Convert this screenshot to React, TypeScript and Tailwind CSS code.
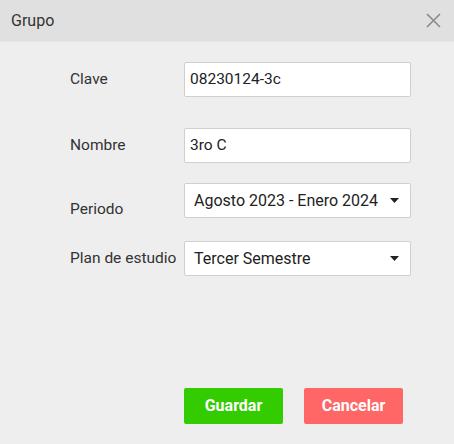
import React from "react";

function Caret() {
  return (
    <svg width="9" height="5" viewBox="0 0 9 5" className="shrink-0">
      <path d="M0 0 L9 0 L4.5 5 Z" fill="#222" />
    </svg>
  );
}

export default function App() {
  return (
    <div
      className="w-[454px] h-[444px] flex flex-col bg-[#eeeeee] text-[#333]"
      style={{ fontFamily: "Roboto, 'Liberation Sans', sans-serif" }}
    >
      <div className="h-[42px] shrink-0 bg-[#e0e0e0] border-b border-[#e6e6e6] flex items-center justify-between pl-[11px] pr-[13px]">
        <span className="text-[16px] text-[#333] leading-none">Grupo</span>
        <svg width="15" height="15" viewBox="0 0 15 15">
          <path d="M1 1 L14 14 M14 1 L1 14" stroke="#8a8a8a" strokeWidth="1.6" />
        </svg>
      </div>
      <div className="flex-1 flex flex-col pl-[70px] pr-[43px]">
        <div className="flex items-center h-[35px] mt-[20px]">
          <span className="w-[114px] text-[15.5px] text-[#333]">Clave</span>
          <div className="flex-1 h-[35px] bg-white border border-[#cfcfcf] rounded-[2px] flex items-center px-[5px] text-[15.5px] text-[#222]">
            08230124-3c
          </div>
        </div>
        <div className="flex items-center h-[35px] mt-[31px]">
          <span className="w-[114px] text-[15.5px] text-[#333]">Nombre</span>
          <div className="flex-1 h-[35px] bg-white border border-[#cfcfcf] rounded-[2px] flex items-center px-[5px] text-[15.5px] text-[#222]">
            3ro C
          </div>
        </div>
        <div className="flex items-start h-[35px] mt-[20px]">
          <span className="w-[114px] text-[15.5px] text-[#333] mt-[15px] leading-[22px]">Periodo</span>
          <div className="flex-1 h-[35px] bg-white border border-[#cfcfcf] rounded-[2px] flex items-center justify-between pl-[9px] pr-[11px] text-[16px] text-[#222]">
            <span>Agosto 2023 - Enero 2024</span>
            <Caret />
          </div>
        </div>
        <div className="flex items-center h-[35px] mt-[23px]">
          <span className="w-[114px] text-[15.5px] text-[#333] whitespace-nowrap">Plan de estudio</span>
          <div className="flex-1 h-[35px] bg-white border border-[#cfcfcf] rounded-[2px] flex items-center justify-between pl-[9px] pr-[11px] text-[16px] text-[#222]">
            <span>Tercer Semestre</span>
            <Caret />
          </div>
        </div>
        <div className="flex gap-[21px] mt-[112px] ml-[114px]">
          <button className="w-[99px] h-[36px] bg-[#33cc00] text-white font-bold text-[16px] rounded-[2px]">
            Guardar
          </button>
          <button className="w-[99px] h-[36px] bg-[#ff6666] text-white font-bold text-[16px] rounded-[2px]">
            Cancelar
          </button>
        </div>
      </div>
    </div>
  );
}
